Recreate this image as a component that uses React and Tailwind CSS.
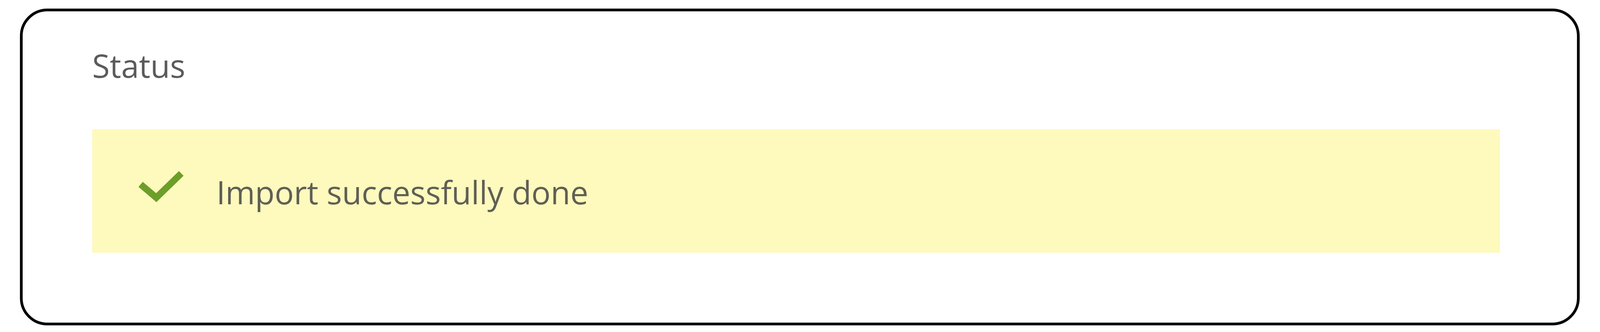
import React from 'react';

function CheckIcon() {
  return (
    <svg width="125" height="100" viewBox="0 0 125 100" className="shrink-0 mt-[-5px]">
      <polyline
        points="10,42 50,76 114,14"
        fill="none"
        stroke="#6d9e2a"
        strokeWidth="17"
        strokeLinejoin="miter"
      />
    </svg>
  );
}

export default function App() {
  return (
    <main
      className="w-full h-[850px] bg-white pt-[22px] pl-[51px] pr-[52px]"
      style={{ fontFamily: '"Open Sans", "Noto Sans", sans-serif' }}
    >
      <section className="w-full h-[811px] border-[7px] border-black rounded-[70px] bg-white pt-[82px] pl-[178px] pr-[197px]">
        <h2 className="text-[82px] leading-[112px] font-normal text-[#5b5b5b]">Status</h2>

        {/* status message */}
        <div className="mt-[108px] h-[316px] bg-[#fef9bd] pt-[104px] pl-[114px] flex items-start">
          <CheckIcon />
          <p className="ml-[79px] text-[82px] leading-[112px] text-[#5f5f55]">Import successfully done</p>
        </div>
      </section>
    </main>
  );
}
